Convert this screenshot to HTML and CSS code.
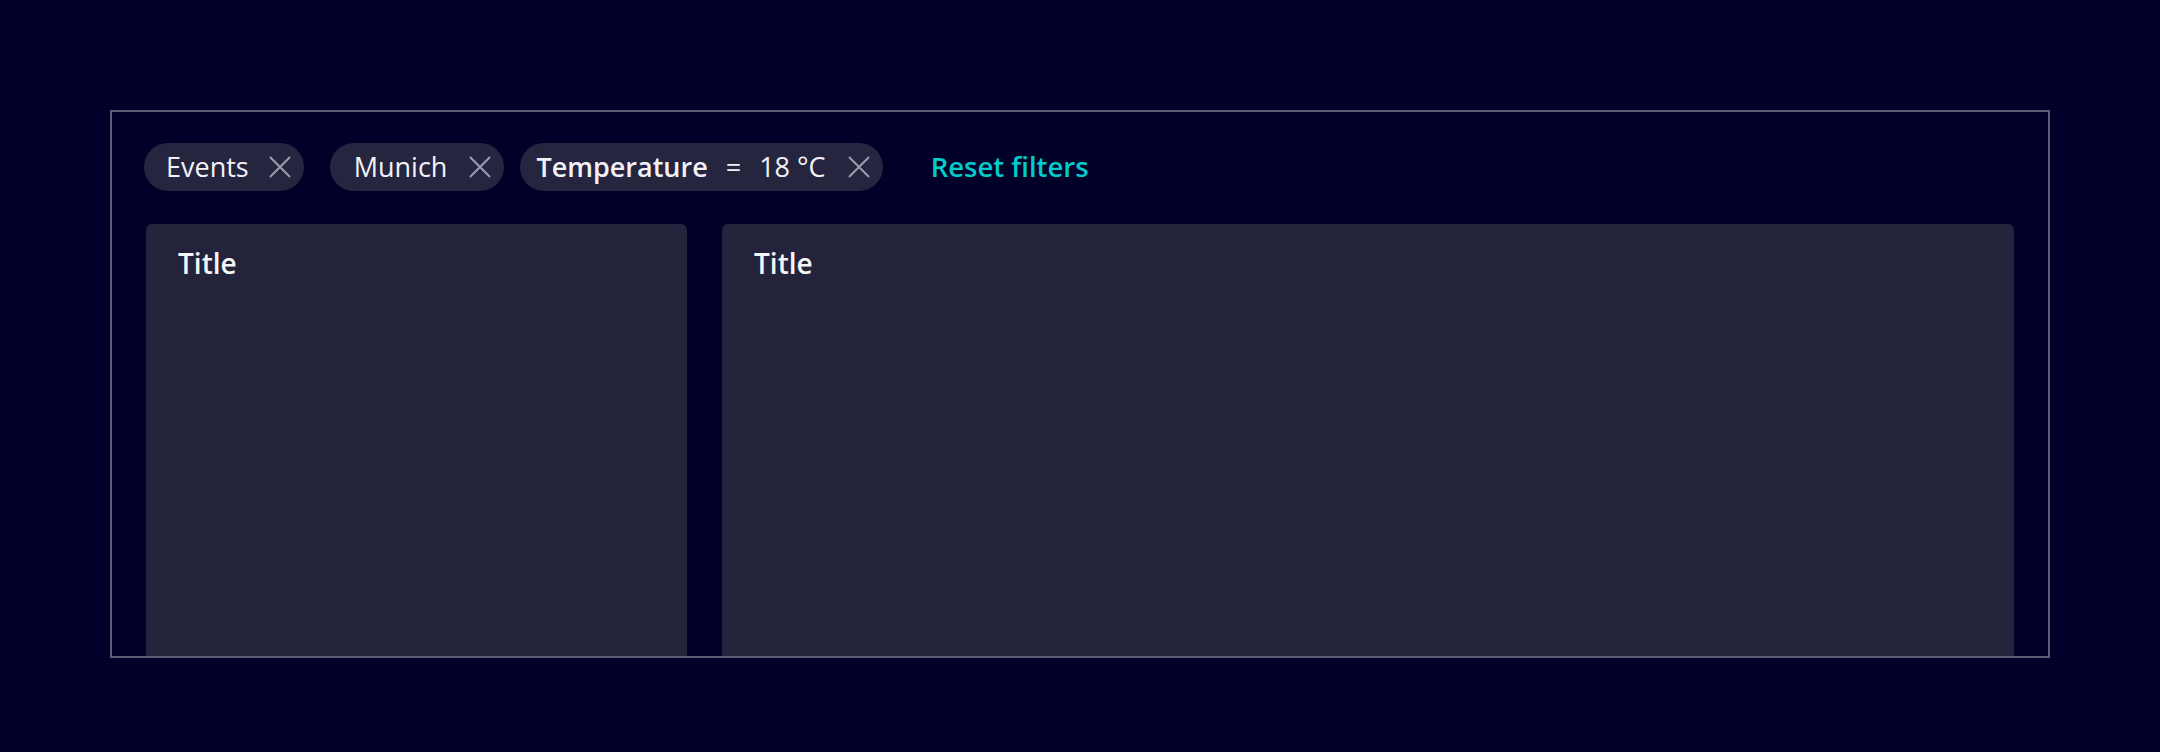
FILE: index.html
```html
<!DOCTYPE html>
<html lang="en">
<head>
<meta charset="utf-8">
<title>Filters</title>
<link rel="stylesheet" href="styles.css">
</head>
<body>
<div class="frame">
  <div class="filter-bar">
    <span class="chip chip-events">
      <span class="chip-label">Events</span>
      <svg class="chip-close" viewBox="0 0 24 24" width="24" height="24"><path d="M2 2 L22 22 M22 2 L2 22"/></svg>
    </span>
    <span class="chip chip-city">
      <span class="chip-label">Munich</span>
      <svg class="chip-close" viewBox="0 0 24 24" width="24" height="24"><path d="M2 2 L22 22 M22 2 L2 22"/></svg>
    </span>
    <span class="chip chip-cat">
      <span class="chip-cat-name">Temperature</span>
      <span class="chip-op">=</span>
      <span class="chip-label">18 °C</span>
      <svg class="chip-close" viewBox="0 0 24 24" width="24" height="24"><path d="M2 2 L22 22 M22 2 L2 22"/></svg>
    </span>
    <button class="reset">Reset filters</button>
  </div>
  <div class="cards">
    <section class="card"><h2 class="card-title">Title</h2></section>
    <section class="card"><h2 class="card-title">Title</h2></section>
  </div>
</div>
</body>
</html>
```
FILE: styles.css
```css
html, body {
  margin: 0;
  padding: 0;
  background: #000028;
}
body {
  font-family: "Open Sans", "Noto Sans", sans-serif;
  color: #f2f2f6;
  width: 2160px;
  height: 752px;
  overflow: hidden;
}
.frame {
  box-sizing: border-box;
  margin: 110px 0 0 110px;
  width: 1940px;
  height: 548px;
  border: 2px solid #5c5c77;
  overflow: hidden;
  padding: 31px 34px 0 32px;
}
.filter-bar {
  display: flex;
  align-items: center;
  height: 48px;
}
.chip {
  display: inline-flex;
  align-items: center;
  height: 48px;
  line-height: 48px;
  border-radius: 24px;
  background: #252540;
  font-size: 27px;
  padding: 0 12px 0 24px;
  box-sizing: border-box;
  white-space: nowrap;
}
.chip-events {
  margin-right: 26px;
  padding-left: 22px;
}
.chip-events .chip-close { margin-left: 19px; }
.chip-city { margin-right: 16px; }
.chip-cat { padding-left: 16px; }
.chip-label { font-weight: 400; }
.chip-cat-name { font-weight: 600; }
.chip-op { margin: 0 18px; }
.chip-close {
  margin-left: 21px;
  fill: none;
  stroke: #9c9caf;
  stroke-width: 2;
  flex: none;
}
.reset {
  margin-left: 48px;
  background: none;
  border: 0;
  padding: 0;
  font-family: inherit;
  font-size: 27.5px;
  font-weight: 600;
  color: #00cccc;
  line-height: 48px;
  cursor: pointer;
}
.cards {
  display: grid;
  grid-template-columns: 541px 1fr;
  column-gap: 35px;
  margin-top: 33px;
  padding-left: 2px;
}
.card {
  background: #23233c;
  border-radius: 6px;
  height: 600px;
  padding: 20px 32px;
  box-sizing: border-box;
}
.card-title {
  margin: 0;
  font-size: 28px;
  font-weight: 600;
  line-height: 39px;
  color: #f5f5f8;
}
```
